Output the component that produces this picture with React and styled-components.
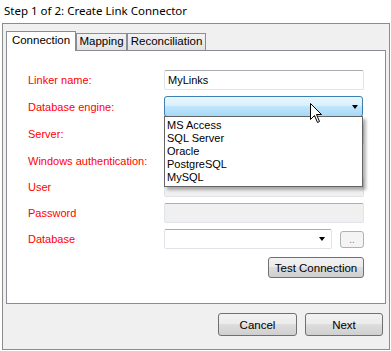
import React from "react";
import styled, { createGlobalStyle } from "styled-components";

const GlobalStyle = createGlobalStyle`
  body {
    margin: 0;
    background: #ffffff;
    font-family: "Liberation Sans", Arial, sans-serif;
  }
`;

const Window = styled.div`
  width: 391px;
  height: 351px;
  background: #ffffff;
  overflow: hidden;
`;

const Title = styled.div`
  height: 23px;
  padding-left: 4px;
  font-family: "Noto Sans", "Liberation Sans", sans-serif;
  font-size: 11.5px;
  line-height: 21px;
  color: #000000;
`;

const Frame = styled.div`
  box-sizing: border-box;
  margin-left: 2px;
  width: 388px;
  height: 327px;
  border: 1px solid #8c8c8c;
  background: #f0f0f0;
  padding: 7px 3px 0 3px;
  display: flex;
  flex-direction: column;
`;

const TabStrip = styled.div`
  display: flex;
  align-items: flex-end;
  height: 19px;
`;

const Tab = styled.div`
  box-sizing: border-box;
  width: ${p => p.$w}px;
  height: ${p => (p.$active ? 20 : 17)}px;
  margin-bottom: ${p => (p.$active ? -1 : 0)}px;
  position: relative;
  z-index: ${p => (p.$active ? 1 : 0)};
  border: 1px solid #898c95;
  border-bottom: none;
  background: ${p =>
    p.$active ? "#ffffff" : "linear-gradient(#f3f3f3, #e2e2e2)"};
  font-size: 11.5px;
  line-height: ${p => (p.$active ? 17 : 15)}px;
  text-align: center;
  white-space: nowrap;
  color: #000;
`;

const Panel = styled.div`
  box-sizing: border-box;
  height: 254px;
  border: 1px solid #898c95;
  background: #ffffff;
  padding: 19px 20px 0 21px;
  display: flex;
  flex-direction: column;
`;

const FormGrid = styled.div`
  display: grid;
  grid-template-columns: 136px 200px;
  grid-template-rows: 20px 21px 21px 21px 20px 20px 20px;
  row-gap: 6px;
  align-items: center;
`;

const Label = styled.div`
  font-size: 11px;
  color: #ff0000;
  line-height: 16px;
  white-space: nowrap;
`;

const TextBox = styled.div`
  box-sizing: border-box;
  height: 20px;
  width: 200px;
  border: 1px solid #e0e3e8;
  border-top-color: #abadb3;
  border-radius: 2px;
  background: ${p => (p.$disabled ? "#f0f0f0" : "#ffffff")};
  font-size: 11px;
  line-height: 18px;
  padding-left: 3px;
  color: #000;
`;

const ComboWrap = styled.div`
  position: relative;
  width: 199px;
  height: 21px;
`;

const Combo = styled.div`
  box-sizing: border-box;
  height: 100%;
  border: 1px solid #3c7fb1;
  border-radius: 3px;
  background: linear-gradient(#eaf6fd 0%, #d9f0fc 45%, #bee6fd 50%, #a7d9f5 100%);
  display: flex;
  align-items: center;
  justify-content: flex-end;
  padding-right: 4px;
`;

const Arrow = styled.div`
  width: 0;
  height: 0;
  border-left: 3.5px solid transparent;
  border-right: 3.5px solid transparent;
  border-top: 4px solid #000;
`;

const DropList = styled.div`
  position: absolute;
  top: 20px;
  left: 0;
  width: 199px;
  box-sizing: border-box;
  border: 1px solid #646464;
  background: #ffffff;
  box-shadow: 3px 3px 3px rgba(0, 0, 0, 0.3);
  padding: 2px 0 2px 2px;
  z-index: 5;
`;

const DropItem = styled.div`
  height: 13px;
  font-size: 11px;
  line-height: 13px;
  color: #000;
`;

const Cursor = styled.svg`
  position: absolute;
  left: 146px;
  top: 7px;
  z-index: 6;
`;

const DbRow = styled.div`
  display: flex;
  align-items: center;
  gap: 8px;
`;

const PlainCombo = styled.div`
  box-sizing: border-box;
  width: 168px;
  height: 20px;
  border: 1px solid #e0e3e8;
  border-top-color: #abadb3;
  border-radius: 2px;
  background: #ffffff;
  display: flex;
  align-items: center;
  justify-content: flex-end;
  padding-right: 6px;
`;

const Button = styled.div`
  box-sizing: border-box;
  width: ${p => p.$w}px;
  height: ${p => p.$h}px;
  border: 1px solid ${p => (p.$disabled ? "#adb2b5" : "#707070")};
  border-radius: 3px;
  background: ${p =>
    p.$disabled
      ? "#f4f4f4"
      : "linear-gradient(#f2f2f2 0%, #ebebeb 50%, #dddddd 50%, #cfcfcf 100%)"};
  font-size: ${p => p.$fs || 11.5}px;
  color: ${p => (p.$disabled ? "#838383" : "#000")};
  display: flex;
  align-items: center;
  justify-content: center;
`;

const TestRow = styled.div`
  display: flex;
  justify-content: flex-end;
  margin-top: 8px;
  padding-right: 1px;
`;

const Footer = styled.div`
  display: flex;
  justify-content: flex-end;
  gap: 8px;
  margin-top: 9px;
  padding-right: 3px;
`;

const engines = ["MS Access", "SQL Server", "Oracle", "PostgreSQL", "MySQL"];

const App = () => (
  <Window>
    <GlobalStyle />
    <Title>Step 1 of 2: Create Link Connector</Title>
    <Frame>
      <TabStrip>
        <Tab $active $w={70}>Connection</Tab>
        <Tab $w={51}>Mapping</Tab>
        <Tab $w={79}>Reconciliation</Tab>
      </TabStrip>
      <Panel>
        <FormGrid>
          <Label>Linker name:</Label>
          <TextBox>MyLinks</TextBox>

          <Label>Database engine:</Label>
          <ComboWrap>
            <Combo>
              <Arrow />
            </Combo>
            <DropList>
              {engines.map(e => (
                <DropItem key={e}>{e}</DropItem>
              ))}
            </DropList>
            <Cursor width="13" height="21" viewBox="0 0 13 21">
              <path
                d="M0.5 0.5 L0.5 16.5 L4.5 12.5 L7.5 19.5 L9.5 18.5 L6.5 11.5 L11.5 11.5 Z"
                fill="#ffffff"
                stroke="#000000"
                strokeWidth="1"
              />
            </Cursor>
          </ComboWrap>

          <Label>Server:</Label>
          <TextBox />

          <Label>Windows authentication:</Label>
          <div />

          <Label>User</Label>
          <TextBox $disabled />

          <Label>Password</Label>
          <TextBox $disabled />

          <Label>Database</Label>
          <DbRow>
            <PlainCombo>
              <Arrow />
            </PlainCombo>
            <Button $disabled $w={24} $h={17} $fs={10}>..</Button>
          </DbRow>
        </FormGrid>
        <TestRow>
          <Button $w={96} $h={21}>Test Connection</Button>
        </TestRow>
      </Panel>
      <Footer>
        <Button $w={79} $h={23}>Cancel</Button>
        <Button $w={78} $h={23}>Next</Button>
      </Footer>
    </Frame>
  </Window>
);

export default App;
